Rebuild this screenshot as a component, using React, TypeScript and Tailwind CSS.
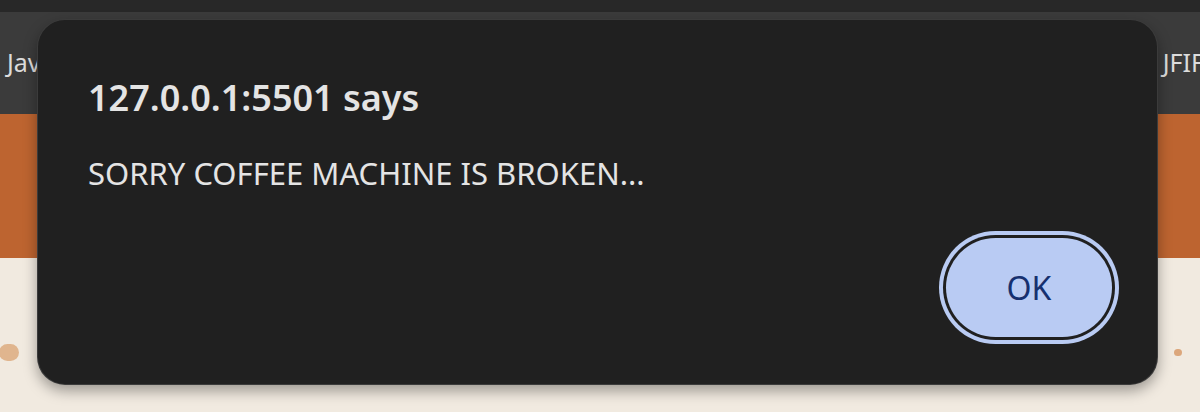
export default function App() {
  return (
    <div className="relative w-[1200px] h-[412px] overflow-hidden bg-[#f1eae0] font-['Noto_Sans',sans-serif]">
      {/* browser chrome + page behind the alert */}
      <div className="h-[12px] bg-[#282828]" />
      <div className="h-[102px] bg-[#3b3b3b] flex items-center justify-between overflow-hidden text-[25px] text-[#dcdcdc]">
        <span className="pl-[7px]">JavaScript</span>
        <span className="-mr-[4px]">JFIF</span>
      </div>
      <div className="h-[144px] bg-[#bd6430]" />
      <div className="relative h-[154px]">
        <span className="absolute left-[-1px] top-[86px] w-[20px] h-[17px] rounded-full bg-[#e0b58e]" />
        <span className="absolute left-[1174px] top-[91px] w-[8px] h-[7px] rounded-full bg-[#dca77c]" />
      </div>

      {/* alert dialog */}
      <div className="absolute left-[37px] top-[19px] w-[1121px] h-[366px] rounded-[28px] bg-[#202020] border border-[#ffffff1f] shadow-[0_6px_14px_rgba(0,0,0,0.35)] flex flex-col pl-[50px] pr-[38px] pt-[56px] pb-[40px]">
        <h1 className="text-[36px] leading-[44px] font-semibold text-[#e4e4e4]">127.0.0.1:5501 says</h1>
        <p className="mt-[34px] text-[31px] leading-[38px] text-[#e4e4e4]">SORRY COFFEE MACHINE IS BROKEN...</p>
        <div className="mt-auto flex justify-end">
          <button className="mr-[7px] mb-[7px] w-[166px] h-[99px] rounded-full bg-[#b9cbf3] text-[32px] text-[#16306f] ring-4 ring-[#b9cbf3] ring-offset-[3px] ring-offset-[#202020]">
            OK
          </button>
        </div>
      </div>
    </div>
  );
}
